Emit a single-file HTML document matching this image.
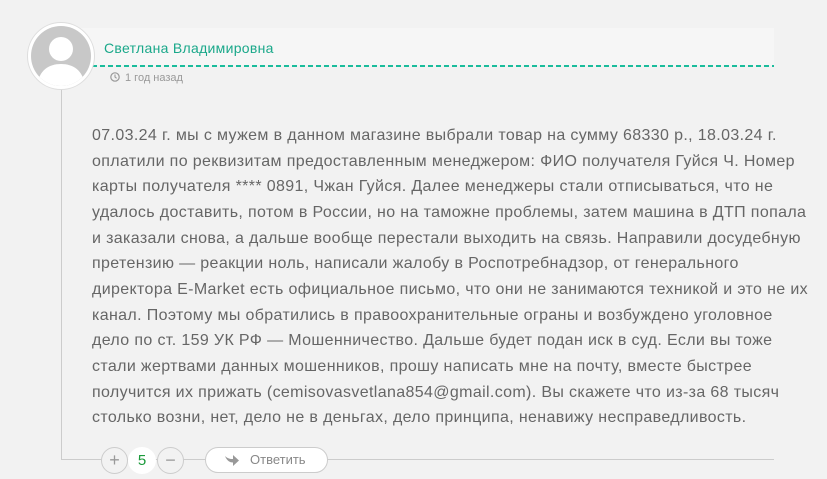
<!DOCTYPE html>
<html><head><meta charset="utf-8"><style>
body{margin:0;width:827px;height:479px;background:#f2f2f2;font-family:"Liberation Sans",sans-serif;position:relative;overflow:hidden}
.hdr{position:absolute;left:80px;top:28px;width:694px;height:37px;background:#f6f6f6}
.dash{position:absolute;left:92px;top:65px;width:682px;height:2px;background:repeating-linear-gradient(90deg,#1abc9c 0 5px,transparent 5px 8px)}
.name{position:absolute;left:104px;top:40px;font-size:14px;color:#1aa88a;letter-spacing:0.3px}
.time{position:absolute;left:110px;top:72px;font-size:11px;color:#999}
.av{position:absolute;left:28px;top:23px;width:60px;height:60px;border-radius:50%;background:#fff;border:3px solid #fff;box-shadow:0 0 0 1px #ddd;overflow:hidden}
.vl{position:absolute;left:61px;top:86px;width:1px;height:373px;background:#ccc}
.hl{position:absolute;left:61px;top:459px;width:713px;height:1px;background:#ccc}
.txt{position:absolute;left:92px;top:123px;font-size:16px;letter-spacing:0.36px;line-height:25.65px;color:#666;white-space:nowrap}
.btn{position:absolute;top:447px;width:25px;height:25px;border:1px solid #ccc;border-radius:50%;background:#f2f2f2;text-align:center;line-height:24px;color:#999;font-size:18px}
.num{position:absolute;left:128px;top:447px;width:28px;height:27px;border-radius:50%;background:#fff;text-align:center;line-height:27px;color:#1a9a3a;font-size:15px}
.reply{position:absolute;left:205px;top:447px;width:121px;height:24px;border:1px solid #ccc;border-radius:13px;background:#fff;font-size:13px;color:#888;line-height:24px}
</style></head><body>
<div class="vl"></div><div class="hl"></div>
<div class="hdr"></div><div class="dash"></div>
<div class="av"><svg width="60" height="60" viewBox="0 0 60 60"><rect width="60" height="60" fill="#c8c8c8"/><circle cx="30" cy="23" r="12" fill="#fff"/><path d="M6 60 C8 44 18 38 30 38 C42 38 52 44 54 60Z" fill="#fff"/></svg></div>
<div class="name">Светлана Владимировна</div>
<div class="time"><svg width="10" height="10" viewBox="0 0 10 10" style="vertical-align:-1px;margin-right:5px"><circle cx="5" cy="5" r="4.2" fill="none" stroke="#999" stroke-width="1.2"/><path d="M5 2.5V5L6.6 6.3" fill="none" stroke="#999" stroke-width="1.1"/></svg>1 год назад</div>
<div class="txt">07.03.24 г. мы с мужем в данном магазине выбрали товар на сумму 68330 р., 18.03.24 г.<br>оплатили по реквизитам предоставленным менеджером: ФИО получателя Гуйся Ч. Номер<br>карты получателя **** 0891, Чжан Гуйся. Далее менеджеры стали отписываться, что не<br>удалось доставить, потом в России, но на таможне проблемы, затем машина в ДТП попала<br>и заказали снова, а дальше вообще перестали выходить на связь. Направили досудебную<br>претензию — реакции ноль, написали жалобу в Роспотребнадзор, от генерального<br>директора E-Market есть официальное письмо, что они не занимаются техникой и это не их<br>канал. Поэтому мы обратились в правоохранительные ограны и возбуждено уголовное<br>дело по ст. 159 УК РФ — Мошенничество. Дальше будет подан иск в суд. Если вы тоже<br>стали жертвами данных мошенников, прошу написать мне на почту, вместе быстрее<br>получится их прижать (cemisovasvetlana854@gmail.com). Вы скажете что из-за 68 тысяч<br>столько возни, нет, дело не в деньгах, дело принципа, ненавижу несправедливость.</div>
<div class="btn" style="left:101px">+</div>
<div class="num">5</div>
<div class="btn" style="left:157px">−</div>
<div class="reply"><svg width="16" height="14" viewBox="0 0 16 14" style="position:absolute;left:18px;top:5px"><path d="M1 3 C4 6 7 6 9 6 L9 2 L15 7.5 L9 13 L9 9.5 C6 9.5 3 8 1 3Z" fill="#999"/></svg><span style="position:absolute;left:44px">Ответить</span></div>
</body></html>
